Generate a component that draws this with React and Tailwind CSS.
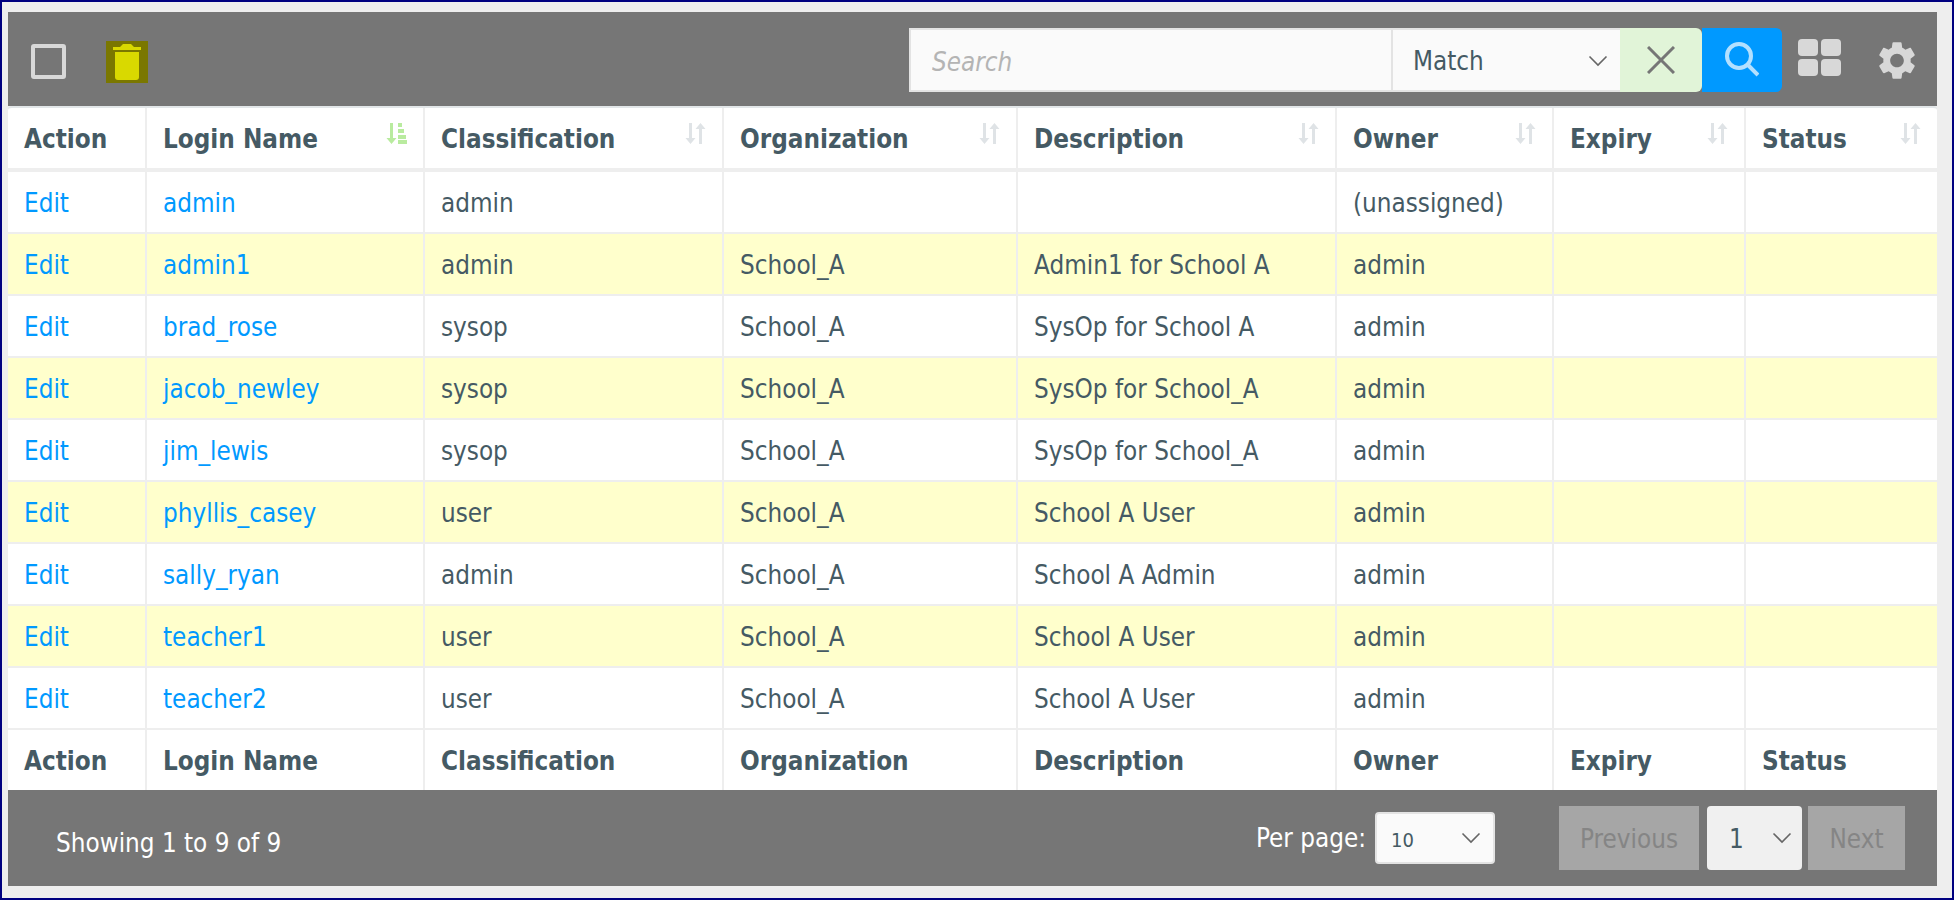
import React from 'react';

const columns = ['Action', 'Login Name', 'Classification', 'Organization', 'Description', 'Owner', 'Expiry', 'Status'];
const widths = ['w-[139px]', 'w-[278px]', 'w-[299px]', 'w-[294px]', 'w-[319px]', 'w-[217px]', 'w-[192px]', 'w-[191px]'];

const rows = [
  { login: 'admin', cls: 'admin', org: '', desc: '', owner: '(unassigned)' },
  { login: 'admin1', cls: 'admin', org: 'School_A', desc: 'Admin1 for School A', owner: 'admin' },
  { login: 'brad_rose', cls: 'sysop', org: 'School_A', desc: 'SysOp for School A', owner: 'admin' },
  { login: 'jacob_newley', cls: 'sysop', org: 'School_A', desc: 'SysOp for School_A', owner: 'admin' },
  { login: 'jim_lewis', cls: 'sysop', org: 'School_A', desc: 'SysOp for School_A', owner: 'admin' },
  { login: 'phyllis_casey', cls: 'user', org: 'School_A', desc: 'School A User', owner: 'admin' },
  { login: 'sally_ryan', cls: 'admin', org: 'School_A', desc: 'School A Admin', owner: 'admin' },
  { login: 'teacher1', cls: 'user', org: 'School_A', desc: 'School A User', owner: 'admin' },
  { login: 'teacher2', cls: 'user', org: 'School_A', desc: 'School A User', owner: 'admin' },
];

const Chevron = ({ className }) => (
  <svg viewBox="0 0 20 12" className={className} fill="none" stroke="currentColor" strokeWidth="1.6">
    <path d="M1.5 1.5 L10 10 L18.5 1.5" />
  </svg>
);

// both arrows, used on the columns that are not sorted
const SortIdle = () => (
  <svg viewBox="0 0 21 21" className="w-[21px] h-[21px] text-[#dfe3e6]" fill="currentColor">
    <path d="M4 0h3v15h3.5l-5 6-5-6H4z" />
    <path d="M14 21h3V6h3.5l-5-6-5 6H14z" />
  </svg>
);

const SortActive = () => (
  <svg viewBox="0 0 21 21" className="w-[21px] h-[21px] text-[#b9eb9f]" fill="currentColor">
    <path d="M4 0h3v15h3.5l-5 6-5-6H4z" />
    <rect x="12" y="0" width="4" height="4" />
    <rect x="12" y="6" width="6" height="4" />
    <rect x="12" y="12" width="8" height="4" />
    <rect x="12" y="17" width="9" height="4" />
  </svg>
);

const GEAR =
  'M19.14 12.94c.04-.3.06-.61.06-.94 0-.32-.02-.64-.07-.94l2.03-1.58c.18-.14.23-.41.12-.61l-1.92-3.32c-.12-.22-.37-.29-.59-.22l-2.39.96c-.5-.38-1.03-.7-1.62-.94L14.4 2.81c-.04-.24-.24-.41-.48-.41h-3.84c-.24 0-.43.17-.47.41L9.25 5.35c-.59.24-1.13.57-1.62.94l-2.39-.96c-.22-.08-.47 0-.59.22L2.74 8.87c-.12.21-.08.47.12.61l2.03 1.58c-.05.3-.09.63-.09.94s.02.64.07.94l-2.03 1.58c-.18.14-.23.41-.12.61l1.92 3.32c.12.22.37.29.59.22l2.39-.96c.5.38 1.03.7 1.62.94l.36 2.54c.05.24.24.41.48.41h3.84c.24 0 .44-.17.47-.41l.36-2.54c.59-.24 1.13-.56 1.62-.94l2.39.96c.22.08.47 0 .59-.22l1.92-3.32c.12-.22.07-.47-.12-.61l-2.01-1.58zM12 15.6c-1.98 0-3.6-1.62-3.6-3.6s1.62-3.6 3.6-3.6 3.6 1.62 3.6 3.6-1.62 3.6-3.6 3.6z';

const cell = 'h-[62px] px-[16px] pt-[2px] border-r-2 border-b-2 border-[#eeeeee] last:border-r-0 align-middle text-left font-normal whitespace-nowrap';

export default function App() {
  return (
    <div className="w-[1954px] h-[900px] border-2 border-[#000080] bg-[#eeeeee] pl-[6px] pt-[10px] pr-[15px] pb-[12px] font-['DejaVu_Sans_Condensed','DejaVu_Sans',sans-serif] text-[25.8px] text-[#455a64]">
      <div className="w-[1929px] h-[874px] flex flex-col">
        {/* Toolbar */}
        <div className="h-[94px] shrink-0 bg-[#767676] flex items-center pl-[23px] pr-[21px]">
          <div className="mt-[5px] w-[35px] h-[35px] border-[4px] border-[#d8d8d8] rounded-[3px]" />
          <div className="mt-[5px] ml-[40px] w-[42px] h-[42px] bg-[#7a7700] flex items-center justify-center">
            <svg viewBox="0 0 28 36" className="w-[28px] h-[36px] text-[#d9d900]" fill="currentColor">
              <path d="M10 0h8l3 3h7v3H0V3h7z" />
              <path d="M2 8h24v25a3 3 0 0 1-3 3H5a3 3 0 0 1-3-3z" />
            </svg>
          </div>

          {/* Search group */}
          <div className="mt-[2px] ml-auto flex h-[64px]">
            <input
              placeholder="Search"
              className="w-[482px] h-full bg-[#fafafa] border-2 border-[#e3e3e3] border-r-0 px-[21px] pt-[3px] italic outline-none placeholder:text-[#b4b4b4]"
            />
            <div className="relative w-[229px] h-full bg-[#fafafa] border-2 border-r-0 border-[#e3e3e3] flex items-center pl-[20px] pt-[3px]">
              Match
              <Chevron className="absolute right-[12px] top-[25px] w-[20px] h-[12px] text-[#666666]" />
            </div>
            <button className="w-[82px] h-full bg-[#e1f4d8] rounded-r-[6px] flex items-center justify-center text-[#767676]">
              <svg viewBox="0 0 28 28" className="w-[28px] h-[28px]" fill="none" stroke="currentColor" strokeWidth="3">
                <path d="M1 1 L27 27 M27 1 L1 27" />
              </svg>
            </button>
            <button className="w-[80px] h-full bg-[#0099ff] rounded-r-[6px] flex items-center justify-center text-[#b3e0ff]">
              <svg viewBox="0 0 34 36" className="w-[34px] h-[36px]" fill="none" stroke="currentColor" strokeWidth="4">
                <circle cx="14" cy="14" r="12" />
                <path d="M22.5 22.5 L33 33" />
              </svg>
            </button>
          </div>

          <div className="ml-[16px] w-[43px] h-[37px] grid grid-cols-2 gap-[3px] -mt-[3px]">
            <div className="bg-[#d8d8d8] rounded-[4px]" />
            <div className="bg-[#d8d8d8] rounded-[4px]" />
            <div className="bg-[#d8d8d8] rounded-[4px]" />
            <div className="bg-[#d8d8d8] rounded-[4px]" />
          </div>
          <svg viewBox="2 2 20 20" className="mt-[2px] ml-[37px] w-[38px] h-[39px] text-[#d8d8d8]" fill="currentColor" fillRule="evenodd">
            <path d={GEAR} />
          </svg>
        </div>

        {/* Table */}
        <table className="w-[1929px] table-fixed border-separate border-spacing-0 bg-white border-t-2 border-[#e2e6e8] rounded-t-[4px]">
          <thead>
            <tr>
              {columns.map((col, i) => (
                <th key={col} className={`${widths[i]} relative h-[64px] px-[16px] pt-[2px] border-r-2 border-b-4 border-[#eeeeee] last:border-r-0 text-left font-bold`}>
                  {col}
                  {i > 0 && (
                    <span className="absolute right-[16px] top-[15px]">{i === 1 ? <SortActive /> : <SortIdle />}</span>
                  )}
                </th>
              ))}
            </tr>
          </thead>
          <tbody>
            {rows.map((row, i) => (
              <tr key={row.login} className={i % 2 === 1 ? 'bg-[#ffffcc]' : 'bg-white'}>
                <td className={`${cell} text-[#0099ff]`}>Edit</td>
                <td className={`${cell} text-[#0099ff]`}>{row.login}</td>
                <td className={cell}>{row.cls}</td>
                <td className={cell}>{row.org}</td>
                <td className={cell}>{row.desc}</td>
                <td className={cell}>{row.owner}</td>
                <td className={cell}></td>
                <td className={cell}></td>
              </tr>
            ))}
          </tbody>
          <tfoot>
            <tr>
              {columns.map((col) => (
                <th key={col} className="h-[60px] px-[16px] pt-[2px] border-r-2 border-[#eeeeee] last:border-r-0 text-left font-bold">{col}</th>
              ))}
            </tr>
          </tfoot>
        </table>

        {/* Pagination */}
        <div className="h-[96px] shrink-0 bg-[#767676] flex items-center pl-[48px] pr-[32px] text-white">
          <span className="mt-[10px]">Showing 1 to 9 of 9</span>
          <span className="ml-auto">Per page:</span>
          <div className="relative ml-[9px] w-[120px] h-[52px] bg-[#fafafa] border-2 border-[#e3e3e3] rounded-[4px] flex items-center pl-[14px] text-[20px] text-[#455a64]">
            <span className="mt-[4px]">10</span>
            <Chevron className="absolute right-[12px] top-[18px] w-[20px] h-[12px] text-[#666666]" />
          </div>
          <div className="ml-[64px] w-[140px] h-[64px] pt-[2px] bg-[#a6a6a6] flex items-center justify-center text-[#858585]">Previous</div>
          <div className="relative ml-[8px] w-[95px] h-[64px] pt-[2px] bg-[#f0f0f0] rounded-[4px] flex items-center pl-[22px] text-[#455a64]">
            1
            <Chevron className="absolute right-[10px] top-[26px] w-[20px] h-[12px] text-[#666666]" />
          </div>
          <div className="ml-[6px] w-[97px] h-[64px] pt-[2px] bg-[#a6a6a6] flex items-center justify-center text-[#858585]">Next</div>
        </div>
      </div>
    </div>
  );
}
